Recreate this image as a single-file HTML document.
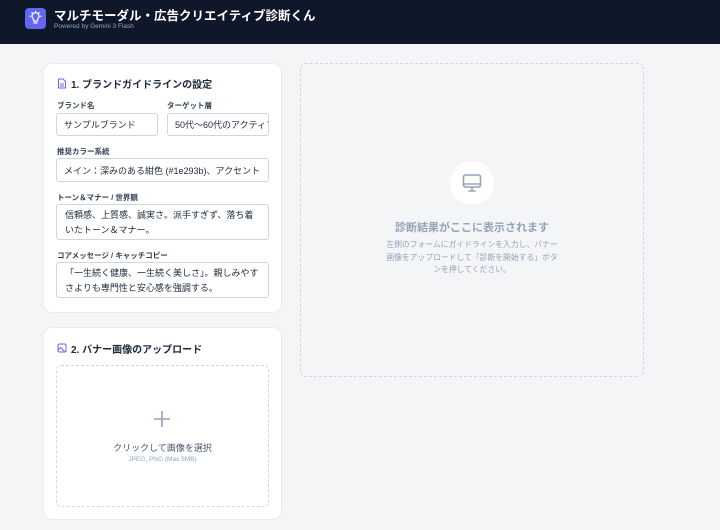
<!DOCTYPE html>
<html><head><meta charset="utf-8"><style>
*{box-sizing:border-box;margin:0;padding:0}
body{width:720px;height:530px;background:#f4f5f7;font-family:"Liberation Sans","Noto Sans CJK JP",sans-serif;position:relative;overflow:hidden;color:#1e293b}
.hdr{position:absolute;left:0;top:0;width:720px;height:44px;background:#0f172a}
.logo{position:absolute;left:25px;top:8px;width:21px;height:21px;border-radius:4px;background:#6366f1}
.t1{position:absolute;left:54px;top:5px;color:#fff;font-weight:bold;font-size:12.5px;white-space:nowrap}
.t2{position:absolute;left:54px;top:23px;color:#94a3b8;font-size:6.5px}
.card{position:absolute;left:43px;width:239px;background:#fff;border:1px solid #e8eaee;border-radius:9px}
.h{position:absolute;font-size:10px;font-weight:bold;color:#1e293b;white-space:nowrap}
.lb{position:absolute;font-size:7.5px;font-weight:bold;color:#334155;white-space:nowrap}
.in{position:absolute;border:1px solid #d1d5db;border-radius:3px;font-size:9px;color:#1e293b;padding:0 0 0 7px;white-space:nowrap;overflow:hidden;display:flex;align-items:center}
.ta{position:absolute;border:1px solid #d1d5db;border-radius:3px;font-size:9px;line-height:15px;color:#1e293b;padding:3px 8px}
.dash{position:absolute;border:1.5px dashed #d4d8de;border-radius:5px}
</style></head><body>
<div class="hdr">
 <div class="logo"><svg width="21" height="21" viewBox="0 0 21 21" fill="none" stroke="#fff" stroke-width="1.2" stroke-linecap="round"><path d="M8.5 13h4M9 15h3"/><path d="M8.5 12c0-1.5-1.5-2-1.5-3.8a3.5 3.5 0 0 1 7 0c0 1.8-1.5 2.3-1.5 3.8"/><path d="M10.5 3.3v.6M5 8.2h.6M15.4 8.2h.6M6.8 4.6l.4.4M14.2 4.6l-.4.4"/></svg></div>
 <div class="t1">マルチモーダル・広告クリエイティブ診断くん</div>
 <div class="t2">Powered by Gemini 3 Flash</div>
</div>

<div class="card" style="top:63px;height:250px"></div>
<svg style="position:absolute;left:57px;top:78px" width="10" height="11" viewBox="0 0 10 11" fill="none" stroke="#6366f1" stroke-width="1"><path d="M1.5 1h4.5l2.5 2.5V10h-7z"/><path d="M3 6h4M3 8h4"/></svg>
<div class="h" style="left:71px;top:76px">1. ブランドガイドラインの設定</div>
<div class="lb" style="left:57px;top:100px">ブランド名</div>
<div class="lb" style="left:167px;top:100px">ターゲット層</div>
<div class="in" style="left:56px;top:113px;width:102px;height:23px">サンプルブランド</div>
<div class="in" style="left:167px;top:113px;width:102px;height:23px">50代〜60代のアクティブ</div>
<div class="lb" style="left:57px;top:146px">推奨カラー系統</div>
<div class="in" style="left:56px;top:158px;width:213px;height:24px">メイン：深みのある紺色 (#1e293b)、アクセント</div>
<div class="lb" style="left:57px;top:192px">トーン＆マナー / 世界観</div>
<div class="ta" style="left:56px;top:204px;width:213px;height:36px">信頼感、上質感、誠実さ。派手すぎず、落ち着いたトーン＆マナー。</div>
<div class="lb" style="left:57px;top:250px">コアメッセージ / キャッチコピー</div>
<div class="ta" style="left:56px;top:262px;width:213px;height:36px">「一生続く健康、一生続く美しさ」。親しみやすさよりも専門性と安心感を強調する。</div>

<div class="card" style="top:327px;height:193px"></div>
<svg style="position:absolute;left:57px;top:343px" width="10" height="10" viewBox="0 0 10 10" fill="none" stroke="#6366f1" stroke-width="1"><rect x="1" y="1" width="8" height="8" rx="1.5"/><path d="M1 7l2.5-2.5 4 4M6 3.5h.1"/></svg>
<div class="h" style="left:71px;top:341px">2. バナー画像のアップロード</div>
<div class="dash" style="left:56px;top:365px;width:213px;height:142px"></div>
<svg style="position:absolute;left:153px;top:410px" width="18" height="18" viewBox="0 0 18 18" stroke="#94a3b8" stroke-width="1.6"><path d="M9 1v16M1 9h16"/></svg>
<div style="position:absolute;left:56px;width:213px;top:441px;text-align:center;font-size:9px;color:#475569">クリックして画像を選択</div>
<div style="position:absolute;left:56px;width:213px;top:456px;text-align:center;font-size:6.5px;color:#94a3b8">JPEG, PNG (Max 5MB)</div>

<div class="dash" style="left:300px;top:63px;width:344px;height:314px"></div>
<div style="position:absolute;left:450px;top:161px;width:44px;height:44px;border-radius:50%;background:#fff"></div>
<svg style="position:absolute;left:461px;top:172px" width="22" height="22" viewBox="0 0 22 22" fill="none" stroke="#94a3b8" stroke-width="1.6" stroke-linecap="round"><rect x="2.5" y="3" width="17" height="12" rx="2"/><path d="M2.5 12h17M8 19h6M11 15v4"/></svg>
<div style="position:absolute;left:300px;width:344px;top:219px;text-align:center;font-size:11px;font-weight:bold;color:#94a3b8">診断結果がここに表示されます</div>
<div style="position:absolute;left:384px;width:176px;top:239px;text-align:center;font-size:7.8px;line-height:12.5px;color:#94a3b8">左側のフォームにガイドラインを入力し、バナー画像をアップロードして「診断を開始する」ボタンを押してください。</div>
</body></html>
